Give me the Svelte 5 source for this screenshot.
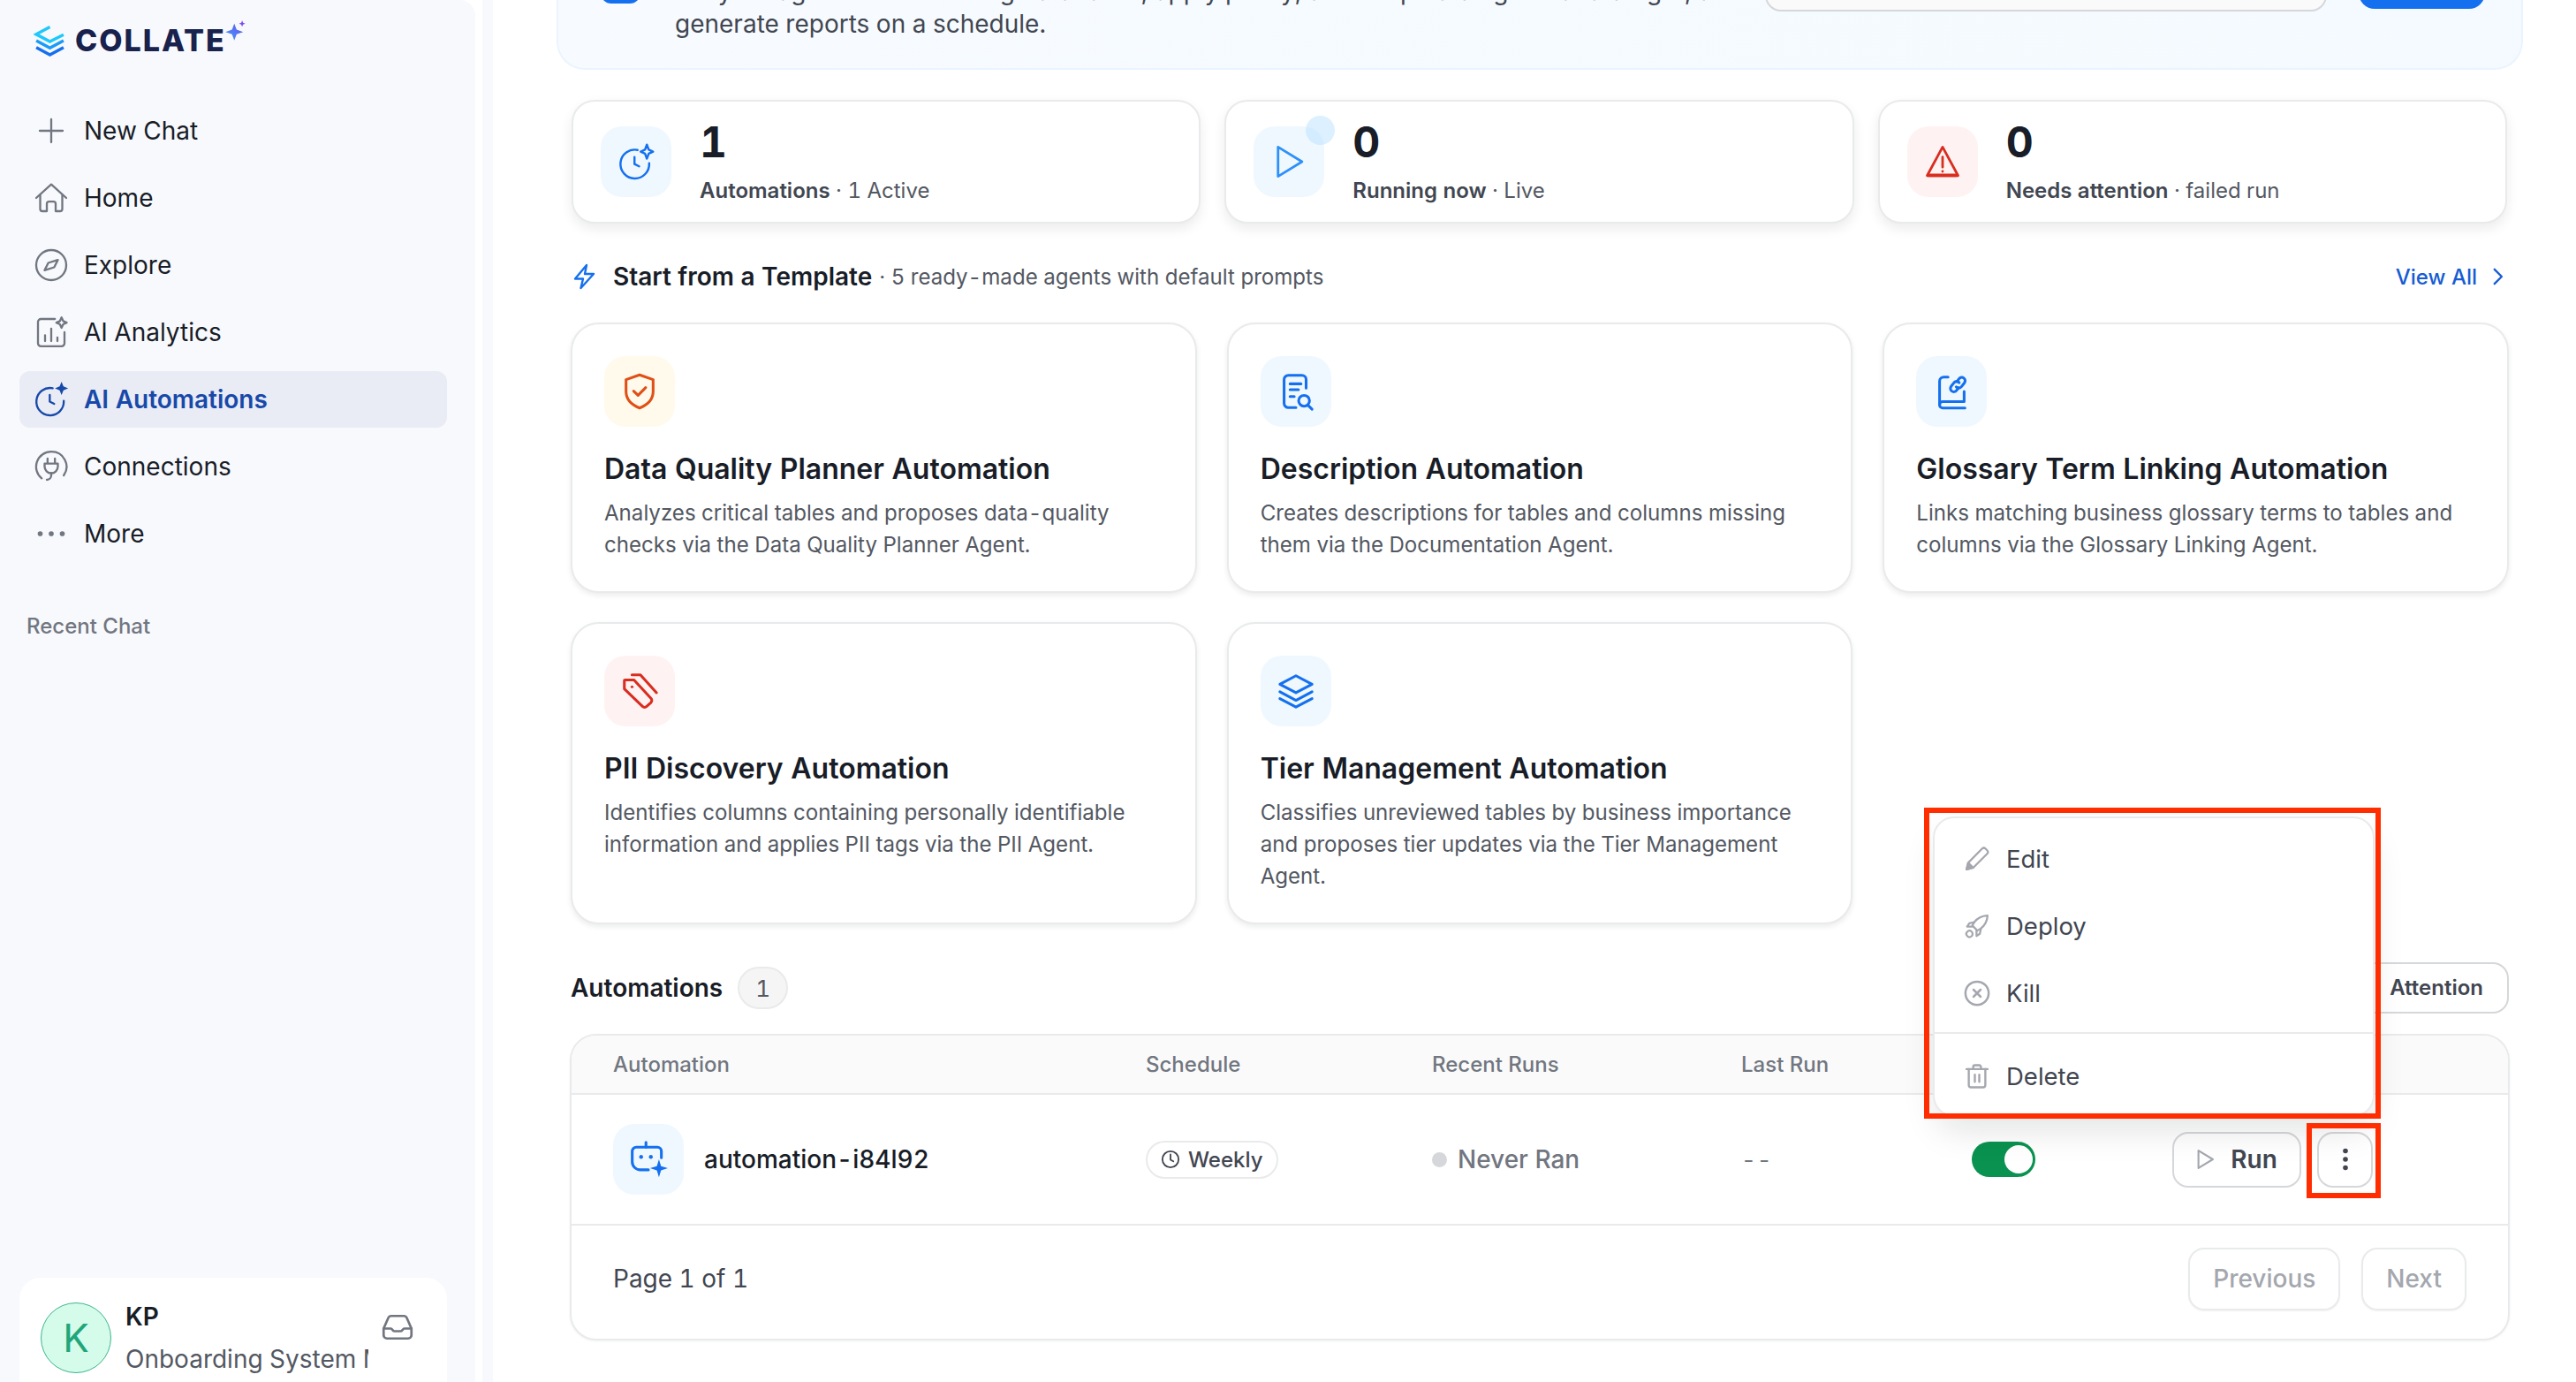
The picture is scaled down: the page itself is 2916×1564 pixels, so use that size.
<script>
  const nav = [
    { label: "New Chat", paths: ["M12 4.200v15.600M4.200 12h15.600"] },
    { label: "Home", paths: ["M1.800 12 12 2.800 22.200 12", "M4.500 10v9.500A1.500 1.500 0 0 0 6 21h3v-5a1.500 1.500 0 0 1 1.500-1.500h3A1.500 1.500 0 0 1 15 16v5h3a1.500 1.500 0 0 0 1.500-1.500V10"] },
    { label: "Explore", paths: ["M22.200 12a10.200 10.200 0 1 1-20.400 0 10.200 10.200 0 0 1 20.400 0z", "M16.500 8.500l-2.500 5-6.500 2 2.500-5z"] },
    { label: "AI Analytics", paths: ["M14.500 3H5a2 2 0 0 0-2 2v14.500a2 2 0 0 0 2 2h14a2 2 0 0 0 2-2V12", "M7.800 18v-4M12 18V9.500M16.200 18v-2.500", "M19 2l1.100 2.400 2.400 1.100-2.400 1.100L19 9l-1.100-2.400-2.400-1.100 2.400-1.100z"] },
    { label: "AI Automations", active: true, paths: ["M13 4.400A9.300 9.300 0 1 0 20.500 13", "M11 9v4.500l3 1.500"], star: "M19 0l1.300 3.200L23.500 4.500l-3.200 1.300L19 9l-1.300-3.200-3.200-1.300 3.200-1.300z" },
    { label: "Connections", paths: ["M5.500 20A10.200 10.200 0 0 1 12 1.900 10.200 10.200 0 0 1 20.500 18", "M9.500 6.500v3.500M14.500 6.500v3.500M7.500 10h9v2a4.500 4.500 0 0 1-9 0z", "M12 16.500v1.500a3 3 0 0 1-3 3"] },
    { label: "More", dots: true, paths: [] },
  ];

  const templates = [
    { title: "Data Quality Planner Automation", desc: "Analyzes critical tables and proposes data-quality checks via the Data Quality Planner Agent.", tone: "amber",
      paths: ["M12 2.200 20 5v7c0 5-3.500 8-8 9.800C7.500 20 4 17 4 12V5z", "M8.500 11.800l2.600 2.500 4.500-4.600"] },
    { title: "Description Automation", desc: "Creates descriptions for tables and columns missing them via the Documentation Agent.", tone: "blue",
      paths: ["M18 10V5a2.500 2.500 0 0 0-2.500-2.500h-8A2.500 2.500 0 0 0 5 5v14a2.500 2.500 0 0 0 2.500 2.500H12", "M8.500 7.500h6.500M8.500 11h5M8.500 15h2.500", "M20 17.500a3.200 3.200 0 1 1-6.400 0 3.200 3.200 0 0 1 6.400 0zM19 20l2.500 2.500"] },
    { title: "Glossary Term Linking Automation", desc: "Links matching business glossary terms to tables and columns via the Glossary Linking Agent.", tone: "blue",
      paths: ["M10 3.500H7.500A2.500 2.500 0 0 0 5 6v14a1.800 1.800 0 0 0 1.800 1.800H20", "M19.500 12v6H6.800A1.800 1.800 0 0 0 5 19.800", "M15.200 6.200l1.300-1.700a2 2 0 0 1 3.200 2.400l-1.800 2.300a2 2 0 0 1-3.100.1", "M16.600 6.800a2 2 0 0 0-3-.1l-1.800 2.300a2 2 0 0 0 3.200 2.400l1.200-1.500"] },
    { title: "PII Discovery Automation", desc: "Identifies columns containing personally identifiable information and applies PII tags via the PII Agent.", tone: "red",
      paths: ["M3.500 5.500h5.200l10 10.800a1.800 1.800 0 0 1 0 2.500l-2.500 2.300a1.800 1.800 0 0 1-2.500 0L3 10.800V6a.5.5 0 0 1 .5-.5z", "M7.500 2.500h5L22 13", "M7.500 9.500h.1"] },
    { title: "Tier Management Automation", desc: "Classifies unreviewed tables by business importance and proposes tier updates via the Tier Management Agent.", tone: "blue",
      paths: ["M12 3 2.500 8l9.500 5 9.500-5z", "M2.500 12.500l9.500 5 9.500-5", "M2.500 16.500l9.500 5 9.500-5"] },
  ];
</script>

<div class="page">
  <aside class="sidebar">
    <div class="logo">
      <svg class="logo-mark" viewBox="0 0 36 36" fill="none" stroke-width="3.400">
        <path d="M18 2.500 3 10.500l15 8 15-7.500" stroke="#1fc8fb" />
        <path d="M3 17.500l15 8 15-8" stroke="#1a9bf8" />
        <path d="M3 25l15 8 15-8" stroke="#1570ef" />
      </svg>
      <span class="logo-text">COLLATE</span>
      <svg class="logo-star" viewBox="0 0 20 22">
        <defs>
          <linearGradient id="star" x1="0" y1="1" x2="1" y2="0">
            <stop offset="0" stop-color="#3fa0f5" />
            <stop offset="1" stop-color="#6a4ff0" />
          </linearGradient>
        </defs>
        <path d="M8.500 4l2.200 5.800L17 12l-6.300 2.200L8.500 20l-2.200-5.800L0 12l6.300-2.200z" fill="url(#star)" />
        <path d="M16 1l.9 2.100L19 4l-2.100.9L16 7l-.9-2.100L13 4l2.100-.9z" fill="#7a4df0" />
      </svg>
    </div>

    <nav class="nav">
      {#each nav as item}
        <div class="nav-item" class:active={item.active}>
          <svg class="nav-icon" viewBox="0 0 24 24" fill="none" stroke="currentColor" stroke-width="1.400" stroke-linecap="round" stroke-linejoin="round">
            {#each item.paths as d}<path {d} />{/each}
            {#if item.star}<path d={item.star} fill="currentColor" stroke="none" />{/if}
            {#if item.dots}
              <circle cx="4.500" cy="12" r="1.700" fill="currentColor" stroke="none" />
              <circle cx="12" cy="12" r="1.700" fill="currentColor" stroke="none" />
              <circle cx="19.500" cy="12" r="1.700" fill="currentColor" stroke="none" />
            {/if}
          </svg>
          <span>{item.label}</span>
        </div>
      {/each}
    </nav>

    <div class="recent">Recent Chat</div>

    <div class="user">
      <div class="avatar">K</div>
      <div class="user-text">
        <div class="user-name">KP</div>
        <div class="user-org">Onboarding System Manager</div>
      </div>
      <svg class="inbox" viewBox="0 0 24 20" fill="none" stroke="#717680" stroke-width="1.800" stroke-linecap="round" stroke-linejoin="round">
        <path d="M1.500 11 5 3a2.500 2.500 0 0 1 2.300-1.500h9.400A2.500 2.500 0 0 1 19 3l3.500 8" />
        <path d="M1.500 11v5a2.500 2.500 0 0 0 2.500 2.500h16a2.500 2.500 0 0 0 2.500-2.500v-5h-5.500c-1 0-1.200 2-2.500 2h-5c-1.300 0-1.500-2-2.500-2z" />
      </svg>
    </div>
  </aside>
  <div class="rail"></div>

  <main class="main">
    <section class="banner">
      <div class="banner-icon"></div>
      <div class="banner-text">
        <div>Let your agents run recurring data tasks, apply policy, and keep catalog metadata right, and</div>
        <div>generate reports on a schedule.</div>
      </div>
      <div class="banner-input"></div>
      <div class="banner-btn"></div>
    </section>

    <section class="stats">
      <div class="stat">
        <div class="stat-icon blue">
          <svg viewBox="0 0 24 24" fill="none" stroke="#1570ef" stroke-width="1.400" stroke-linecap="round" stroke-linejoin="round">
            <path d="M13 4.400A9.300 9.300 0 1 0 20.500 13" />
            <path d="M11 9v4.500l3 1.500" />
            <path d="M19 1l1.200 3.200L23 5.500l-2.800 1.300L19 10l-1.200-3.200L15 5.500l2.800-1.300z" />
          </svg>
        </div>
        <div>
          <div class="stat-num">1</div>
          <div class="stat-label"><b>Automations</b> · 1 Active</div>
        </div>
      </div>
      <div class="stat">
        <div class="stat-icon blue">
          <svg viewBox="0 0 24 24" fill="none" stroke="#2e90fa" stroke-width="1.600" stroke-linejoin="round">
            <path d="M5 2.500 20.500 12 5 21.500z" />
          </svg>
          <span class="live-dot"></span>
        </div>
        <div>
          <div class="stat-num">0</div>
          <div class="stat-label"><b>Running now</b> · Live</div>
        </div>
      </div>
      <div class="stat">
        <div class="stat-icon red">
          <svg viewBox="0 0 24 24" fill="none" stroke="#d92d20" stroke-width="1.600" stroke-linecap="round" stroke-linejoin="round">
            <path d="M12 2.500 2 21h20z" />
            <path d="M12 9v6.500M12 18.200v.1" />
            <path d="M3 20.800h18" stroke-width="2.200" />
          </svg>
        </div>
        <div>
          <div class="stat-num">0</div>
          <div class="stat-label"><b>Needs attention</b> · failed run</div>
        </div>
      </div>
    </section>

    <div class="template-head">
      <svg class="bolt" viewBox="0 0 27 30" fill="none" stroke="#1570ef" stroke-width="2.400" stroke-linejoin="round">
        <path d="M16 2 3 17.500h9L9.500 28 24 12h-10z" />
      </svg>
      <span class="template-title">Start from a Template</span>
      <span class="template-sub">· 5 ready-made agents with default prompts</span>
      <span class="view-all">View All
        <svg viewBox="0 0 24 24" fill="none" stroke="#175cd3" stroke-width="2.200" stroke-linecap="round" stroke-linejoin="round">
          <path d="M9 4.500l7.500 7.500L9 19.500" />
        </svg>
      </span>
    </div>

    <section class="templates">
      {#each templates as t}
        <article class="tcard">
          <div class="ticon {t.tone}">
            <svg viewBox="0 0 24 24" fill="none" stroke="currentColor" stroke-width="1.600" stroke-linecap="round" stroke-linejoin="round">
              {#each t.paths as d}<path {d} />{/each}
            </svg>
          </div>
          <h3>{t.title}</h3>
          <p>{t.desc}</p>
        </article>
      {/each}
    </section>

    <div class="auto-head">
      <span class="auto-title">Automations</span>
      <span class="auto-count">1</span>
      <div class="filters">
        <span class="filter hidden-seg">Active</span>
        <span class="filter">Attention</span>
      </div>
    </div>

    <section class="table">
      <div class="cols thead">
        <span>Automation</span>
        <span>Schedule</span>
        <span>Recent Runs</span>
        <span>Last Run</span>
      </div>
      <div class="cols row">
        <div class="name-cell">
          <div class="ticon blue bot">
            <svg viewBox="0 0 24 24" fill="none" stroke="currentColor" stroke-width="1.700" stroke-linecap="round" stroke-linejoin="round">
              <path d="M10.500 1.500v3" />
              <path d="M20 11V7a2.500 2.500 0 0 0-2.500-2.500h-13A2.500 2.500 0 0 0 2 7v6.500a5 5 0 0 0 5 5h5" />
              <circle cx="7.500" cy="10.500" r="1.200" fill="currentColor" stroke="none" />
              <circle cx="13.500" cy="10.500" r="1.200" fill="currentColor" stroke="none" />
              <path d="M18.500 12l1.300 4.200L24 17.500l-4.200 1.300L18.500 23l-1.300-4.200L13 17.500l4.200-1.300z" fill="currentColor" stroke="none" />
            </svg>
          </div>
          <span class="auto-name">automation-i84l92</span>
        </div>
        <div>
          <span class="pill">
            <svg viewBox="0 0 24 24" fill="none" stroke="#414651" stroke-width="2" stroke-linecap="round" stroke-linejoin="round">
              <circle cx="12" cy="12" r="10" />
              <path d="M12 6v6.500l3.500 2" />
            </svg>
            Weekly
          </span>
        </div>
        <div class="never"><i></i>Never Ran</div>
        <div class="last">--</div>
        <div><div class="toggle"><i></i></div></div>
        <div class="actions">
          <span class="run">
            <svg viewBox="0 0 20 24" fill="none" stroke="#a4a7ae" stroke-width="2" stroke-linejoin="round">
              <path d="M2.500 2.500 18 12 2.500 21.500z" />
            </svg>
            Run
          </span>
          <span class="kebab">
            <svg viewBox="0 0 6 26" fill="#414651">
              <circle cx="3" cy="3.500" r="2.800" />
              <circle cx="3" cy="13" r="2.800" />
              <circle cx="3" cy="22.500" r="2.800" />
            </svg>
          </span>
        </div>
      </div>
      <div class="pager">
        <span>Page 1 of 1</span>
        <div class="pager-btns">
          <span class="pager-btn">Previous</span>
          <span class="pager-btn">Next</span>
        </div>
      </div>
    </section>
  </main>

  <div class="menu">
    <div class="menu-item">
      <svg viewBox="0 0 24 24" fill="none" stroke="#a4a7ae" stroke-width="1.800" stroke-linecap="round" stroke-linejoin="round">
        <path d="M2.500 21.500 4 15.500 16.500 2.800a2.300 2.300 0 0 1 3.200 0l1.400 1.400a2.300 2.300 0 0 1 0 3.200L8.500 20z" />
        <path d="M4 15.500 8.500 20l-6 1.500z" fill="#a4a7ae" />
      </svg>
      Edit
    </div>
    <div class="menu-item">
      <svg viewBox="0 0 24 24" fill="none" stroke="#a4a7ae" stroke-width="1.800" stroke-linecap="round" stroke-linejoin="round">
        <path d="M21.500 2.500c-5 .2-9 2-12 6l-1.800 3 4.600 4.600 3-1.800c4-3 5.900-7 6.200-11.800z" />
        <path d="M9.500 8.500 5 9.500 3 12.500h4.700M15.500 14.500l-1 4.500-3 2v-4.700" />
        <path d="M7 17a2.800 2.800 0 1 0 0 4.200 2.800 2.800 0 0 0 0-4.200z" />
      </svg>
      Deploy
    </div>
    <div class="menu-item">
      <svg viewBox="0 0 24 24" fill="none" stroke="#a4a7ae" stroke-width="2" stroke-linecap="round">
        <circle cx="12" cy="12" r="10.500" />
        <path d="M8.800 8.800l6.400 6.400M15.200 8.800l-6.400 6.400" />
      </svg>
      Kill
    </div>
    <div class="menu-sep"></div>
    <div class="menu-item">
      <svg viewBox="0 0 24 24" fill="none" stroke="#a4a7ae" stroke-width="1.900" stroke-linecap="round" stroke-linejoin="round">
        <path d="M2.500 5.500h19M8.500 5.500V3.500a1.500 1.500 0 0 1 1.500-1.500h4a1.500 1.500 0 0 1 1.500 1.500v2" />
        <path d="M4.500 5.500V20a2 2 0 0 0 2 2h11a2 2 0 0 0 2-2V5.500M10 10.500v6.500M14 10.500v6.500" />
      </svg>
      Delete
    </div>
  </div>

  <div class="mark mark-menu"></div>
  <div class="mark mark-kebab"></div>
</div>

<style>
  :global(body) {
    margin: 0;
    background: #fff;
    overflow: hidden;
  }

  .page {
    position: relative;
    display: flex;
    width: 2916px;
    height: 1564px;
    overflow: hidden;
    font-family: Inter, "Noto Sans", sans-serif;
    font-variant-numeric: tabular-nums;
    color: #181d27;
  }

  /* sidebar */
  .sidebar {
    box-sizing: border-box;
    width: 538px;
    height: 1564px;
    padding: 0 32px 0 22px;
    background: #f8f9fd;
    border-top-right-radius: 18px;
    display: flex;
    flex-direction: column;
    overflow: hidden;
    flex-shrink: 0;
  }

  .rail {
    width: 12px;
    margin-left: 8px;
    background: #f8f9fd;
    flex-shrink: 0;
  }

  .logo {
    display: flex;
    align-items: flex-start;
    height: 88px;
    padding: 28px 0 0 16px;
  }

  .logo-mark {
    width: 37px;
    height: 37px;
  }

  .logo-text {
    margin-left: 10px;
    font-size: 34px;
    line-height: 36px;
    font-weight: 800;
    letter-spacing: 2px;
    color: #18224d;
  }

  .logo-star {
    width: 24px;
    height: 26px;
    margin: -6px 0 0 -1px;
  }

  .nav {
    display: flex;
    flex-direction: column;
    gap: 12px;
  }

  .nav-item {
    display: flex;
    align-items: center;
    gap: 17px;
    height: 64px;
    padding-left: 16px;
    border-radius: 12px;
    font-size: 28px;
    color: #181d27;
  }

  .nav-icon {
    width: 40px;
    height: 40px;
    color: #717680;
    flex-shrink: 0;
  }

  .nav-item.active {
    background: #e9ecf5;
    color: #1849a9;
    font-weight: 600;
  }

  .nav-item.active .nav-icon {
    color: #1849a9;
  }

  .recent {
    margin: 58px 0 0 8px;
    font-size: 24px;
    line-height: 30px;
    font-weight: 500;
    color: #717680;
  }

  .user {
    box-sizing: border-box;
    display: flex;
    align-items: flex-start;
    margin-top: auto;
    height: 118px;
    padding: 26px 0 0 24px;
    background: #fff;
    border-radius: 24px 24px 0 0;
  }

  .avatar {
    box-sizing: border-box;
    width: 80px;
    height: 80px;
    margin-top: 2px;
    border: 1.500px solid #3cb68d;
    border-radius: 50%;
    background: #d5fbeb;
    color: #1fa67a;
    font-size: 44px;
    display: flex;
    align-items: center;
    justify-content: center;
    flex-shrink: 0;
  }

  .user-text {
    width: 275px;
    margin-left: 16px;
    overflow: hidden;
    white-space: nowrap;
  }

  .user-name {
    font-size: 28px;
    line-height: 36px;
    font-weight: 600;
  }

  .user-org {
    margin-top: 12px;
    font-size: 28px;
    line-height: 36px;
    color: #535862;
  }

  .inbox {
    width: 36px;
    height: 30px;
    margin: 15px 0 0 15px;
  }

  /* main column */
  .main {
    flex: 1;
    min-width: 0;
    padding: 0 76px 0 88px;
  }

  .banner {
    box-sizing: border-box;
    display: flex;
    align-items: flex-start;
    height: 139px;
    margin: -60px -16px 0 -16px;
    padding: 20px 41px 0 48px;
    border: 2px solid #eaf4ff;
    border-top: none;
    border-radius: 0 0 32px 32px;
    background: linear-gradient(90deg, #f7fbff, #f4faff);
  }

  .banner-icon {
    width: 45px;
    height: 44px;
    border-radius: 12px;
    background: #1570ef;
    flex-shrink: 0;
  }

  .banner-text {
    flex: 1;
    margin: 12px 0 0 39px;
    font-size: 28px;
    line-height: 37px;
    color: #414651;
    white-space: nowrap;
    overflow: hidden;
  }

  .banner-input {
    box-sizing: border-box;
    width: 636px;
    height: 53px;
    margin-left: 36px;
    background: #fafafa;
    border: 2px solid #d5d7da;
    border-radius: 18px;
    flex-shrink: 0;
  }

  .banner-btn {
    width: 143px;
    height: 50px;
    margin-left: 36px;
    background: #1570ef;
    border-radius: 18px;
    flex-shrink: 0;
  }

  .stats {
    display: grid;
    grid-template-columns: repeat(3, 1fr);
    gap: 27px;
    margin: 34px 2px 0 1px;
  }

  .stat {
    box-sizing: border-box;
    display: flex;
    align-items: center;
    gap: 32px;
    height: 140px;
    padding-left: 31px;
    background: #fff;
    border: 2px solid #e9eaeb;
    border-radius: 26px;
    box-shadow: 0 6px 14px rgba(10, 13, 18, 0.08);
  }

  .stat-icon {
    position: relative;
    width: 80px;
    height: 80px;
    border-radius: 24px;
    display: flex;
    align-items: center;
    justify-content: center;
    flex-shrink: 0;
  }

  .stat-icon svg {
    width: 42px;
    height: 42px;
  }

  .blue {
    background: #eff8ff;
    color: #1570ef;
  }

  .red {
    background: #fef3f2;
    color: #d92d20;
  }

  .amber {
    background: #fffaeb;
    color: #e04f16;
  }

  .live-dot {
    position: absolute;
    top: -12px;
    right: -12px;
    width: 33px;
    height: 33px;
    border-radius: 50%;
    background: rgba(178, 221, 255, 0.45);
  }

  .stat-num {
    font-size: 48px;
    line-height: 52px;
    font-weight: 700;
  }

  .stat-label {
    margin-top: 14px;
    font-size: 24px;
    line-height: 30px;
    color: #535862;
  }

  .stat-label b {
    font-weight: 600;
    color: #414651;
  }

  .template-head {
    display: flex;
    align-items: center;
    height: 40px;
    margin-top: 40px;
  }

  .bolt {
    width: 27px;
    height: 30px;
    margin: 0 19px 0 2px;
  }

  .template-title {
    font-size: 28px;
    font-weight: 600;
  }

  .template-sub {
    margin-left: 8px;
    font-size: 24.100px;
    color: #535862;
  }

  .view-all {
    margin-left: auto;
    display: flex;
    align-items: center;
    gap: 10px;
    font-size: 24px;
    font-weight: 500;
    color: #175cd3;
  }

  .view-all svg {
    width: 26px;
    height: 26px;
  }

  .templates {
    display: grid;
    grid-template-columns: repeat(3, 1fr);
    gap: 33px 34px;
    margin-top: 32px;
  }

  .tcard {
    box-sizing: border-box;
    padding: 36px 36px 34px;
    background: #fff;
    border: 2px solid #e9eaeb;
    border-radius: 32px;
    box-shadow: 0 3px 6px rgba(10, 13, 18, 0.08);
  }

  .ticon {
    width: 80px;
    height: 80px;
    border-radius: 24px;
    display: flex;
    align-items: center;
    justify-content: center;
  }

  .ticon svg {
    width: 46px;
    height: 46px;
  }

  .tcard h3 {
    margin: 26px 0 0;
    font-size: 32px;
    line-height: 44px;
    font-weight: 600;
  }

  .tcard p {
    margin: 10px 0 0;
    font-size: 24.100px;
    line-height: 36px;
    color: #535862;
  }

  .auto-head {
    display: flex;
    align-items: center;
    height: 58px;
    margin-top: 43px;
  }

  .auto-title {
    font-size: 28px;
    font-weight: 600;
  }

  .auto-count {
    box-sizing: border-box;
    width: 57px;
    height: 48px;
    margin-left: 17px;
    border: 2px solid #e9eaeb;
    border-radius: 24px;
    background: #f5f5f5;
    color: #535862;
    font-size: 26px;
    display: flex;
    align-items: center;
    justify-content: center;
  }

  .filters {
    margin: 0 0 0 auto;
    display: flex;
  }

  .filter {
    box-sizing: border-box;
    height: 58px;
    padding: 0 27px 0 20px;
    border: 2px solid #d5d7da;
    border-radius: 0 18px 18px 0;
    font-size: 24px;
    line-height: 54px;
    font-weight: 600;
    color: #414651;
  }

  .hidden-seg {
    border-radius: 18px 0 0 18px;
    border-right: none;
  }

  .table {
    margin: 23px -1px 0 -1px;
    border: 2px solid #e9eaeb;
    border-radius: 30px;
    overflow: hidden;
    background: #fff;
    box-shadow: 0 1px 3px rgba(10, 13, 18, 0.05);
  }

  .cols {
    display: grid;
    grid-template-columns: 602px 324px 350px 261px 227px auto;
    align-items: center;
    padding-left: 47px;
  }

  .thead {
    height: 65px;
    background: #fafafa;
    border-bottom: 2px solid #e9eaeb;
    font-size: 24px;
    font-weight: 500;
    color: #717680;
  }

  .thead span:nth-child(n + 2),
  .row > div:nth-child(n + 2) {
    margin-left: 1px;
  }

  .row {
    height: 146px;
    border-bottom: 2px solid #e9eaeb;
  }

  .name-cell {
    display: flex;
    align-items: center;
    gap: 23px;
  }

  .bot svg {
    width: 44px;
    height: 44px;
  }

  .auto-name {
    font-size: 28px;
    font-weight: 500;
  }

  .pill {
    box-sizing: border-box;
    display: inline-flex;
    align-items: center;
    gap: 9px;
    height: 43px;
    padding: 0 15px;
    border: 2px solid #e9eaeb;
    border-radius: 22px;
    font-size: 24px;
    font-weight: 500;
    color: #414651;
  }

  .pill svg {
    width: 22px;
    height: 22px;
  }

  .never {
    display: flex;
    align-items: center;
    gap: 12px;
    font-size: 28px;
    font-weight: 500;
    color: #717680;
  }

  .never i {
    width: 17px;
    height: 17px;
    border-radius: 50%;
    background: #d5d7da;
  }

  .last {
    font-size: 26px;
    letter-spacing: 1px;
    color: #717680;
  }

  .toggle {
    box-sizing: border-box;
    display: flex;
    justify-content: flex-end;
    align-items: center;
    width: 72px;
    height: 40px;
    padding-right: 3px;
    border-radius: 20px;
    background: #099250;
  }

  .toggle i {
    width: 32px;
    height: 32px;
    border-radius: 50%;
    background: #fff;
  }

  .actions {
    display: flex;
    gap: 18px;
  }

  .run,
  .kebab {
    box-sizing: border-box;
    height: 63px;
    display: flex;
    align-items: center;
    justify-content: center;
    border: 2.500px solid #d5d7da;
    border-radius: 18px;
    background: #fff;
  }

  .run {
    width: 146px;
    gap: 18px;
    font-size: 28px;
    font-weight: 600;
    color: #414651;
  }

  .run svg {
    width: 21px;
    height: 26px;
  }

  .kebab {
    width: 63px;
  }

  .kebab svg {
    width: 6px;
    height: 26px;
  }

  .pager {
    display: flex;
    align-items: center;
    justify-content: space-between;
    height: 128px;
    padding: 0 47px 8px 47px;
    box-sizing: border-box;
    font-size: 28px;
    color: #414651;
  }

  .pager-btns {
    display: flex;
    gap: 24px;
  }

  .pager-btn {
    box-sizing: border-box;
    height: 71px;
    padding: 0 26px;
    border: 2.500px solid #e9eaeb;
    border-radius: 18px;
    font-weight: 500;
    line-height: 66px;
    color: #a4a7ae;
    box-shadow: 0 1px 2px rgba(10, 13, 18, 0.05);
  }

  /* open row menu, sits over the table */
  .menu {
    box-sizing: border-box;
    position: absolute;
    left: 2188px;
    top: 924px;
    width: 500px;
    height: 340px;
    padding: 14px 0;
    background: #fff;
    border: 2px solid #e9eaeb;
    border-radius: 24px;
    box-shadow: 0 20px 40px -6px rgba(10, 13, 18, 0.12);
  }

  .menu-item {
    display: flex;
    align-items: center;
    gap: 18px;
    height: 64px;
    padding-left: 33px;
    margin-bottom: 12px;
    font-size: 27.500px;
    color: #414651;
  }

  .menu-item:last-child {
    margin-bottom: 0;
  }

  .menu-item svg {
    width: 30px;
    height: 30px;
    flex-shrink: 0;
  }

  .menu-sep {
    height: 2px;
    margin: 3px 0 16px;
    background: #e9eaeb;
  }

  /* red annotation boxes from the screenshot */
  .mark {
    box-sizing: border-box;
    position: absolute;
    border: 6px solid #ff2d00;
  }

  .mark-menu {
    left: 2178px;
    top: 914px;
    width: 517px;
    height: 352px;
  }

  .mark-kebab {
    left: 2611px;
    top: 1271px;
    width: 84px;
    height: 85px;
  }
</style>
